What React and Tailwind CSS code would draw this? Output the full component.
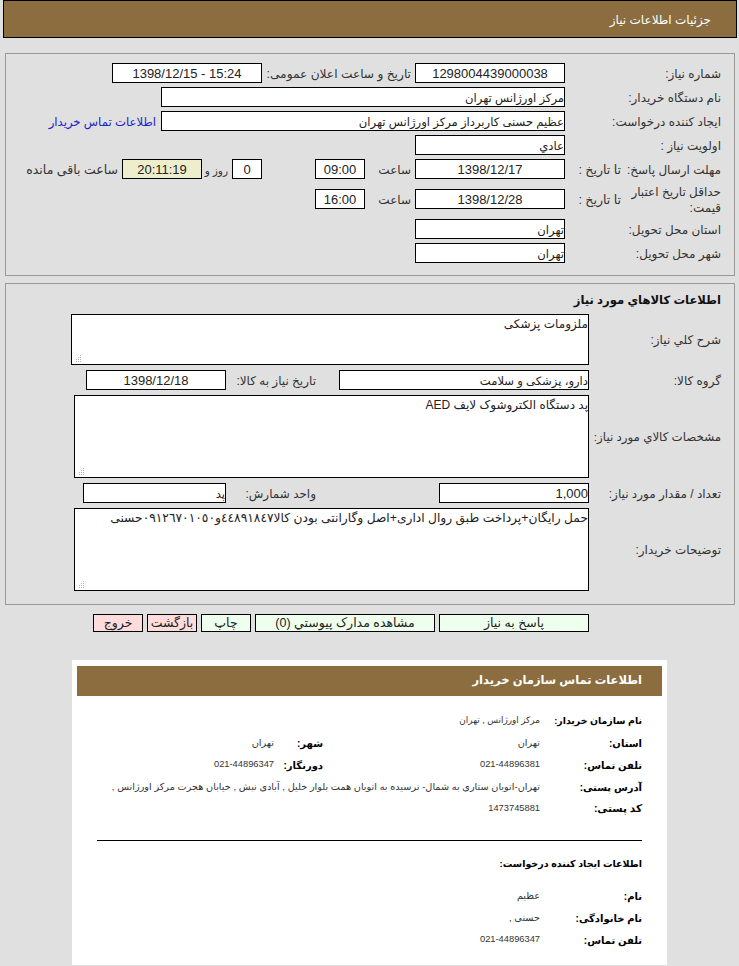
const Box = ({ w, center, ltr, bg = "bg-white", children }) => (
  <div
    dir={ltr ? "ltr" : "rtl"}
    className={`${w} h-[20px] shrink-0 border border-black ${bg} flex items-center leading-none ${center ? "justify-center" : ltr ? "justify-end" : "justify-start pt-[2px]"} ${ltr ? "text-[13px]" : "text-[11.6px]"} text-[#222] whitespace-nowrap overflow-hidden`}
  >
    {children}
  </div>
);

const Lbl = ({ w, children, className = "", size = "text-[12px]" }) => (
  <div className={`${w} shrink-0 ${size} leading-[16px] pt-[1px] text-[#333] ${className}`}>{children}</div>
);

const Row = ({ children, h = "h-[20px]" }) => <div className={`flex items-center ${h}`}>{children}</div>;

const Area = ({ w, h, size = "text-[12px]", children }) => (
  <div className={`${w} ${h} shrink-0 relative border border-black bg-white ${size} pt-[1px] leading-[16px] text-[#222] whitespace-nowrap overflow-hidden`}>
    {children}
    <svg className="absolute left-[2px] bottom-[1px]" width="9" height="9" viewBox="0 0 9 9">
      <g fill="#b8b8b8">
        <rect x="6" y="1" width="1" height="1" />
        <rect x="4" y="3" width="1" height="1" />
        <rect x="6" y="3" width="1" height="1" />
        <rect x="2" y="5" width="1" height="1" />
        <rect x="4" y="5" width="1" height="1" />
        <rect x="6" y="5" width="1" height="1" />
        <rect x="2" y="7" width="1" height="1" />
        <rect x="4" y="7" width="1" height="1" />
        <rect x="6" y="7" width="1" height="1" />
      </g>
    </svg>
  </div>
);

const Btn = ({ w, red, children }) => (
  <button className={`${w} h-[18px] shrink-0 border border-black ${red ? "bg-[#ffdcdc]" : "bg-[#eeffee]"} text-[12.5px] leading-none text-[#222]`}>
    {children}
  </button>
);

const Info = ({ label, value, digits, labelSize = "text-[10px]", valueSize = "text-[9.7px]", children }) => (
  <div className="flex items-center h-[22px] whitespace-nowrap">
    <div className={`w-[102px] shrink-0 ${labelSize} font-bold text-black`}>{label}</div>
    <div dir={digits ? "ltr" : "rtl"} className={`${children ? "w-[217px]" : ""} shrink-0 ${digits ? "text-right text-[9.3px]" : valueSize} text-[#333]`}>{value}</div>
    {children}
  </div>
);

export default function App() {
  return (
    <div dir="rtl" className="w-[739px] h-[966px] overflow-hidden bg-[#e0e0e0] font-['Liberation_Sans','DejaVu_Sans',sans-serif]">
      <div className="ml-[3px] mr-[2px] h-[38px] border border-black bg-[#8b6d3f] flex items-center pr-[25px] pt-[1px] text-[12px] text-white">
        جزئیات اطلاعات نیاز
      </div>

      <div className="mt-[15px] ml-[5px] mr-[4px] h-[223px] border border-[#999] pt-[9px] flex flex-col gap-[4px]">
        <Row>
          <Lbl w="w-[169px]" className="pr-[13px]">شماره نیاز:</Lbl>
          <Box w="w-[150px]" center ltr>1298004439000038</Box>
          <Lbl w="w-[153px]" className="pr-[4px]" size="text-[12.2px]">تاریخ و ساعت اعلان عمومی:</Lbl>
          <Box w="w-[150px]" center ltr>1398/12/15 - 15:24</Box>
        </Row>
        <Row>
          <Lbl w="w-[169px]" className="pr-[13px]">نام دستگاه خریدار:</Lbl>
          <Box w="w-[404px]">مرکز اورژانس تهران</Box>
        </Row>
        <Row>
          <Lbl w="w-[169px]" className="pr-[13px]">ایجاد کننده درخواست:</Lbl>
          <Box w="w-[404px]">عظیم حسنی کاربرداز مرکز اورژانس تهران</Box>
          <a className="pr-[5px] pt-[1px] text-[11.7px] text-[#2222cc] whitespace-nowrap">اطلاعات تماس خریدار</a>
        </Row>
        <Row>
          <Lbl w="w-[169px]" className="pr-[13px]">اولویت نیاز :</Lbl>
          <Box w="w-[150px]">عادي</Box>
        </Row>
        <Row>
          <Lbl w="w-[112px]" className="pr-[13px] whitespace-nowrap">مهلت ارسال پاسخ:</Lbl>
          <Lbl w="w-[57px]" className="pr-[1px]" size="text-[12.5px]">تا تاریخ :</Lbl>
          <Box w="w-[150px]" center ltr>1398/12/17</Box>
          <Lbl w="w-[50px]" className="pr-[4px]">ساعت</Lbl>
          <Box w="w-[50px]" center ltr>09:00</Box>
          <div className="w-[53px] shrink-0" />
          <Box w="w-[30px]" center ltr>0</Box>
          <Lbl w="w-[30px]" className="pr-[4px] whitespace-nowrap" size="text-[10.5px]">روز و</Lbl>
          <Box w="w-[80px]" center ltr bg="bg-[#eeeecc]">20:11:19</Box>
          <Lbl w="w-[96px]" className="pr-[4px] whitespace-nowrap" size="text-[12.5px]">ساعت باقی مانده</Lbl>
        </Row>
        <Row h="h-[32px]">
          <Lbl w="w-[112px]" className="pr-[13px]">حداقل تاریخ اعتبار قیمت:</Lbl>
          <Lbl w="w-[57px]" className="pr-[1px]" size="text-[12.5px]">تا تاریخ :</Lbl>
          <Box w="w-[150px]" center ltr>1398/12/28</Box>
          <Lbl w="w-[50px]" className="pr-[4px]">ساعت</Lbl>
          <Box w="w-[50px]" center ltr>16:00</Box>
        </Row>
        <Row>
          <Lbl w="w-[169px]" className="pr-[13px]">استان محل تحویل:</Lbl>
          <Box w="w-[150px]">تهران</Box>
        </Row>
        <Row>
          <Lbl w="w-[169px]" className="pr-[13px]">شهر محل تحویل:</Lbl>
          <Box w="w-[150px]">تهران</Box>
        </Row>
      </div>

      <div className="mt-[7px] ml-[5px] mr-[4px] h-[322px] border border-[#999] flex flex-col gap-[5px]">
        <div className="h-[25px] pt-[9px] pr-[13px] text-[11.6px] font-bold leading-[14px] text-[#111]">اطلاعات كالاهاي مورد نیاز</div>
        <Row h="h-[51px]">
          <Lbl w="w-[145px]" className="pr-[13px]">شرح کلي نیاز:</Lbl>
          <Area w="w-[518px]" h="h-[51px]">ملزومات پزشکی</Area>
        </Row>
        <Row>
          <Lbl w="w-[145px]" className="pr-[13px]">گروه کالا:</Lbl>
          <Box w="w-[250px]">دارو، پزشکی و سلامت</Box>
          <div className="w-[23px] shrink-0" />
          <Lbl w="w-[90px]" className="whitespace-nowrap">تاریخ نیاز به کالا:</Lbl>
          <Box w="w-[140px]" center ltr>1398/12/18</Box>
        </Row>
        <Row h="h-[83px]">
          <Lbl w="w-[145px]" className="pr-[13px] whitespace-nowrap" size="text-[11.8px]">مشخصات کالاي مورد نیاز:</Lbl>
          <Area w="w-[515px]" h="h-[83px]">پد دستگاه الکتروشوک لایف AED</Area>
        </Row>
        <Row>
          <Lbl w="w-[145px]" className="pr-[13px] whitespace-nowrap">تعداد / مقدار مورد نیاز:</Lbl>
          <Box w="w-[150px]" ltr>1,000</Box>
          <div className="w-[123px] shrink-0" />
          <Lbl w="w-[90px]" className="whitespace-nowrap">واحد شمارش:</Lbl>
          <Box w="w-[143px]">پد</Box>
        </Row>
        <Row h="h-[83px]">
          <Lbl w="w-[145px]" className="pr-[13px]">توضیحات خریدار:</Lbl>
          <Area w="w-[515px]" h="h-[83px]" size="text-[12.25px]">حمل رایگان+پرداخت طبق روال اداری+اصل وگارانتی بودن کالا٤٤٨٩١٨٤٧و٠٩١٢٦٧٠١٠٥٠حسنی</Area>
        </Row>
      </div>

      <div className="mt-[9px] mr-[150px] flex gap-[4px]">
        <Btn w="w-[150px]">پاسخ به نیاز</Btn>
        <Btn w="w-[180px]">مشاهده مدارک پیوستي (0)</Btn>
        <Btn w="w-[50px]">چاپ</Btn>
        <Btn w="w-[50px]" red>بازگشت</Btn>
        <Btn w="w-[50px]" red>خروج</Btn>
      </div>

      <div className="mt-[28px] ml-[72px] mr-[72px] h-[305px] bg-white pt-[6px] px-[5px]">
        <div className="h-[30px] bg-[#8b6d3f] flex items-center pr-[20px] text-[11.5px] font-bold text-white">اطلاعات تماس سازمان خریدار</div>
        <div className="pr-[20px] pl-[20px] pt-[14px]">
          <Info label="نام سازمان خریدار:" value="مرکز اورژانس , تهران" labelSize="text-[9.4px]" valueSize="text-[8.9px]" />
          <Info label="استان:" value="تهران">
            <div className="w-[49px] shrink-0 text-[10px] font-bold text-black">شهر:</div>
            <div className="text-[9.7px] text-[#333]">تهران</div>
          </Info>
          <Info label="تلفن تماس:" value="021-44896381" digits>
            <div className="w-[49px] shrink-0 text-[10px] font-bold text-black">دورنگار:</div>
            <div className="text-[9.3px] text-[#333]" dir="ltr">021-44896347</div>
          </Info>
          <Info label="آدرس پستی:" value="تهران-اتوبان ستاری به شمال- نرسیده به اتوبان همت بلوار خلیل , آبادی نبش , خیابان هجرت مرکز اورژانس ," />
          <Info label="کد پستی:" value="1473745881" digits labelSize="text-[10.5px]" />
          <div className="mt-[20px] h-px bg-black" />
          <div className="mt-[16px] h-[16px] text-[9.5px] font-bold text-black">اطلاعات ایجاد کننده درخواست:</div>
          <div className="mt-[12px]">
            <Info label="نام:" value="عظیم" />
            <Info label="نام خانوادگی:" value="حسنی ," />
            <Info label="تلفن تماس:" value="021-44896347" digits />
          </div>
        </div>
      </div>
    </div>
  );
}
